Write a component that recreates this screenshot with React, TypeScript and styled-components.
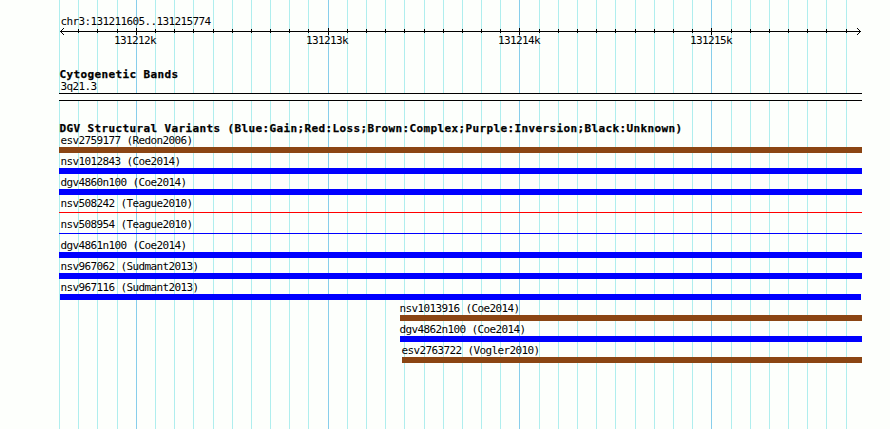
import React from "react";
import styled, { createGlobalStyle } from "styled-components";

const GlobalStyle = createGlobalStyle`
  body {
    margin: 0;
    background: #fdfffc;
  }
`;

const Wrapper = styled.div`
  position: relative;
  box-sizing: border-box;
  width: 890px;
  height: 429px;
  padding: 14px 28px 0 59px;
  overflow: hidden;
  background: #fdfffc;
  color: #000000;
  font-family: "DejaVu Sans Mono", "Liberation Mono", monospace;
`;

const Grid = styled.svg`
  position: absolute;
  top: 0;
  left: 0;
`;

const Content = styled.div`
  position: relative;
  display: flex;
  flex-direction: column;
`;

const Label = styled.div<{ $indent?: number }>`
  height: 14px;
  padding-left: ${({ $indent = 1 }) => $indent + 0.4}px;
  font-size: 11px;
  line-height: 15px;
  letter-spacing: -0.622px;
  white-space: pre;
`;

const Title = styled.div`
  height: 15px;
  padding-left: 0.5px;
  font-size: 11px;
  font-weight: 700;
  line-height: 15px;
  letter-spacing: 0.378px;
  white-space: pre;
  -webkit-text-stroke: 0.25px #000000;
`;

const Ruler = styled.svg`
  display: block;
  width: 803px;
  height: 8px;
`;

const RulerLabels = styled.div`
  display: flex;
  gap: 150px;
  height: 15px;
  margin-top: -3px;
  padding-left: 55px;
`;

const RulerLabel = styled(Label)`
  width: 42px;
  padding-left: 0;
  flex: none;
`;

const Cytogenetic = styled.section`
  height: 35px;
  margin-top: 19px;
`;

const BandLabel = styled(Label)`
  margin-top: -3px;
`;

const Band = styled.div`
  box-sizing: border-box;
  height: 8px;
  background: #fdfffc;
  border-top: 1px solid #000000;
  border-bottom: 1px solid #000000;
`;

const Variants = styled.section`
  margin-top: 19px;
`;

const Rows = styled.div`
  display: flex;
  flex-direction: column;
  margin-top: -3px;
`;

const Row = styled.div`
  height: 21px;
`;

const Bar = styled.div<{ $color: string; $left: number; $right: number; $thin?: boolean }>`
  height: ${({ $thin }) => ($thin ? 1 : 6)}px;
  margin: ${({ $thin }) => ($thin ? 2 : 0)}px ${({ $right }) => $right}px 0
    ${({ $left }) => $left}px;
  background: ${({ $color }) => $color};
`;

const BROWN = "#8b4513";
const BLUE = "#0000ff";
const RED = "#ff0000";

const gridLines = [
  59, 78, 97, 117, 136, 155, 174, 193, 213, 232, 251, 270, 289, 308, 328, 347,
  366, 385, 404, 424, 443, 462, 481, 500, 519, 539, 558, 577, 596, 615, 635,
  654, 673, 692, 711, 731, 750, 769, 788, 807, 826, 846,
];
const majorLines = [136, 328, 519, 711];

interface Variant {
  name: string;
  color: string;
  left?: number;
  right?: number;
  text?: number;
  thin?: boolean;
}

const variants: Variant[] = [
  { name: "esv2759177 (Redon2006)", color: BROWN },
  { name: "nsv1012843 (Coe2014)", color: BLUE },
  { name: "dgv4860n100 (Coe2014)", color: BLUE },
  { name: "nsv508242 (Teague2010)", color: RED, thin: true },
  { name: "nsv508954 (Teague2010)", color: BLUE, thin: true },
  { name: "dgv4861n100 (Coe2014)", color: BLUE },
  { name: "nsv967062 (Sudmant2013)", color: BLUE },
  { name: "nsv967116 (Sudmant2013)", color: BLUE, left: 1, right: 1 },
  { name: "nsv1013916 (Coe2014)", color: BROWN, left: 341, text: 340 },
  { name: "dgv4862n100 (Coe2014)", color: BLUE, left: 341, text: 340 },
  { name: "esv2763722 (Vogler2010)", color: BROWN, left: 343, text: 342 },
];

const App = () => {
  return (
    <>
      <GlobalStyle />
      <Wrapper>
        <Grid width="890" height="429" shapeRendering="crispEdges">
          {gridLines.map((x) => (
            <rect
              key={x}
              x={x}
              y="0"
              width="1"
              height="429"
              fill={majorLines.includes(x) ? "#87ceeb" : "#afeeee"}
            />
          ))}
        </Grid>
        <Content>
          <Label>chr3:131211605..131215774</Label>
          <Ruler viewBox="59 28 803 8" shapeRendering="crispEdges">
            <rect x="60" y="31" width="801" height="1" />
            {gridLines.slice(1).map((x) =>
              majorLines.includes(x) ? (
                <rect key={x} x={x} y="28" width="1" height="7" />
              ) : (
                <rect key={x} x={x} y="29" width="1" height="4" />
              )
            )}
            {[1, 2, 3].map((d) => (
              <g key={d}>
                <rect x={60 + d} y={31 - d} width="1" height="1" />
                <rect x={60 + d} y={31 + d} width="1" height="1" />
                <rect x={860 - d} y={31 - d} width="1" height="1" />
                <rect x={860 - d} y={31 + d} width="1" height="1" />
              </g>
            ))}
          </Ruler>
          <RulerLabels>
            <RulerLabel>131212k</RulerLabel>
            <RulerLabel>131213k</RulerLabel>
            <RulerLabel>131214k</RulerLabel>
            <RulerLabel>131215k</RulerLabel>
          </RulerLabels>
          <Cytogenetic>
            <Title>Cytogenetic Bands</Title>
            <BandLabel>3q21.3</BandLabel>
            <Band />
          </Cytogenetic>
          <Variants>
            <Title>
              DGV Structural Variants
              (Blue:Gain;Red:Loss;Brown:Complex;Purple:Inversion;Black:Unknown)
            </Title>
            <Rows>
              {variants.map(({ name, color, left = 0, right = 0, text, thin }) => (
                <Row key={name}>
                  <Label $indent={text}>{name}</Label>
                  <Bar $color={color} $left={left} $right={right} $thin={thin} />
                </Row>
              ))}
            </Rows>
          </Variants>
        </Content>
      </Wrapper>
    </>
  );
};

export default App;
